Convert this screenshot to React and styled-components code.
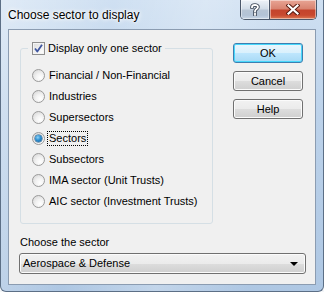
import React from 'react';
import styled, { createGlobalStyle } from 'styled-components';

const GlobalStyle = createGlobalStyle`
  html, body {
    margin: 0;
    padding: 0;
    background: #f4f6f8;
  }
  body {
    font-family: "Liberation Sans", Arial, sans-serif;
    font-size: 11px;
    color: #000;
  }
`;

const Window = styled.div`
  width: 324px;
  height: 292px;
  box-sizing: border-box;
  display: flex;
  flex-direction: column;
  padding: 0 7px 6px 7px;
  border: 1px solid #5c6f86;
  border-top: none;
  border-radius: 0 0 6px 6px;
  background:
    linear-gradient(100deg, rgba(255,255,255,0.35) 0%, rgba(255,255,255,0) 30%, rgba(255,255,255,0.25) 55%, rgba(255,255,255,0) 80%),
    linear-gradient(180deg, #cfe0f2 0%, #bcd2ea 40%, #aec7e3 100%);
`;

const TitleBar = styled.div`
  height: 29px;
  display: flex;
  align-items: flex-start;
  margin-right: -1px;
`;

const Title = styled.div`
  font-size: 12px;
  line-height: 14px;
  padding-top: 8px;
  color: #000;
  text-shadow: 0 0 6px #fff, 0 0 4px #fff, 0 0 2px #fff;
`;

const CaptionGroup = styled.div`
  margin-left: auto;
  display: flex;
  height: 20px;
  border: 1px solid #4b586a;
  border-top: none;
  border-radius: 0 0 5px 5px;
  overflow: hidden;
  box-sizing: border-box;
`;

const CaptionButton = styled.div`
  width: ${({ $w }) => $w}px;
  height: 100%;
  display: flex;
  align-items: center;
  justify-content: center;
  box-sizing: border-box;
  box-shadow: inset 0 0 0 1px rgba(255,255,255,0.45);
  background: ${({ $close }) =>
    $close
      ? 'linear-gradient(180deg, #e8a595 0%, #d98471 45%, #c4442c 55%, #c8492f 80%, #dc7b55 100%)'
      : 'linear-gradient(180deg, #eef3f8 0%, #d3dde8 45%, #b7c5d5 55%, #b3c3d6 80%, #c9d7e6 100%)'};
  & + & {
    border-left: 1px solid #4b586a;
  }
`;

const Client = styled.div`
  flex: 1;
  display: flex;
  flex-direction: column;
  border: 1px solid #8b9cb1;
  background: #f0f0f0;
  padding: 12px 12px 9px 11px;
`;

const TopRow = styled.div`
  display: flex;
  gap: 20px;
  align-items: flex-start;
`;

const Group = styled.fieldset`
  margin: 0;
  width: 193px;
  box-sizing: border-box;
  border: 1px solid #d5dfe5;
  border-radius: 3px;
  padding: 0 0 11px 11px;
  min-width: 0;
`;

const Legend = styled.legend`
  padding: 0 3px 0 4px;
  margin-left: -4px;
  height: 13px;
`;

const Option = styled.label`
  display: flex;
  align-items: center;
  gap: ${({ $gap }) => $gap || 4}px;
  height: ${({ $h }) => $h || 21}px;
  line-height: 13px;
  white-space: nowrap;
`;

const Box = styled.span`
  width: 13px;
  height: 13px;
  box-sizing: border-box;
  border: 1px solid #8f8f8f;
  background: linear-gradient(135deg, #dcdcdc 0%, #f6f6f6 70%, #fff 100%);
  box-shadow: inset 0 0 0 1px #f4f4f4;
  display: flex;
  align-items: center;
  justify-content: center;
  flex-shrink: 0;
`;

const Radio = styled.span`
  width: 13px;
  height: 13px;
  box-sizing: border-box;
  border-radius: 50%;
  border: 1px solid #9a9a9a;
  background: radial-gradient(circle at 65% 70%, #ffffff 0%, #f2f2f2 40%, #d2d2d2 100%);
  display: flex;
  align-items: center;
  justify-content: center;
  flex-shrink: 0;
  &::after {
    content: '';
    display: ${({ $on }) => ($on ? 'block' : 'none')};
    width: 7px;
    height: 7px;
    border-radius: 50%;
    background: radial-gradient(circle at 40% 35%, #8fd3f7 0%, #2c8ed0 45%, #16598f 100%);
    box-shadow: 0 0 0 0.5px #1d4f78;
  }
`;

const Radios = styled.div`
  display: flex;
  flex-direction: column;
  margin-top: 10px;
`;

const OptionText = styled.span`
  padding: 0 1px;
  margin-left: -1px;
  outline: ${({ $focus }) => ($focus ? '1px dotted #000' : 'none')};
  outline-offset: 0;
`;

const ButtonColumn = styled.div`
  display: flex;
  flex-direction: column;
  gap: 8px;
  margin-top: 1px;
`;

const Button = styled.div`
  width: 70px;
  height: 20px;
  box-sizing: border-box;
  border-radius: 3px;
  display: flex;
  align-items: center;
  justify-content: center;
  line-height: 13px;
  border: 1px solid ${({ $default }) => ($default ? '#3c7fb1' : '#707070')};
  box-shadow: inset 0 0 0 1px ${({ $default }) => ($default ? '#48d8fb' : '#fbfbfb')};
  background: ${({ $default }) =>
    $default
      ? 'linear-gradient(180deg, #eaf6fd 0%, #d9f0fc 50%, #bee6fd 51%, #a7d9f5 100%)'
      : 'linear-gradient(180deg, #f2f2f2 0%, #ebebeb 50%, #dddddd 51%, #cfcfcf 100%)'};
`;

const FieldLabel = styled.div`
  margin-top: 11px;
  line-height: 14px;
`;

const Combo = styled.div`
  margin-top: 4px;
  margin-left: -1px;
  width: 287px;
  height: 21px;
  box-sizing: border-box;
  border: 1px solid #707070;
  border-radius: 3px;
  box-shadow: inset 0 0 0 1px #fbfbfb;
  background: linear-gradient(180deg, #f2f2f2 0%, #ebebeb 50%, #dddddd 51%, #cfcfcf 100%);
  display: flex;
  align-items: center;
  padding: 0 7px 0 3px;
  line-height: 13px;
`;

const ComboArrow = styled.span`
  margin-left: auto;
  width: 0;
  height: 0;
  border-left: 4px solid transparent;
  border-right: 4px solid transparent;
  border-top: 4px solid #000;
  margin-top: 1px;
`;

const options = [
  'Financial / Non-Financial',
  'Industries',
  'Supersectors',
  'Sectors',
  'Subsectors',
  'IMA sector (Unit Trusts)',
  'AIC sector (Investment Trusts)',
];

const selected = 3;

const CheckMark = () => (
  <svg width="9" height="9" viewBox="0 0 9 9">
    <path d="M1 4.5 L3.3 7.5 L8 0.8" fill="none" stroke="#3f56a0" strokeWidth="1.8" strokeLinejoin="round" />
  </svg>
);

const HelpGlyph = () => (
  <svg width="10" height="13" viewBox="0 0 10 13">
    <path
      d="M2 4 C2 1.5 8 1.2 8 4 C8 6 5 6 5 8.2 M5 10.5 L5 11.8"
      fill="none"
      stroke="#3d4756"
      strokeWidth="3.6"
      strokeLinecap="square"
    />
    <path
      d="M2 4 C2 1.5 8 1.2 8 4 C8 6 5 6 5 8.2 M5 10.5 L5 11.8"
      fill="none"
      stroke="#fff"
      strokeWidth="1.8"
      strokeLinecap="square"
    />
  </svg>
);

const CloseGlyph = () => (
  <svg width="14" height="11" viewBox="0 0 14 11">
    <path d="M2.5 1.5 L11.5 9.5 M11.5 1.5 L2.5 9.5" stroke="#5a1d12" strokeWidth="4.2" strokeLinecap="square" />
    <path d="M2.5 1.5 L11.5 9.5 M11.5 1.5 L2.5 9.5" stroke="#fff" strokeWidth="2.2" strokeLinecap="square" />
  </svg>
);

const App = () => (
  <>
    <GlobalStyle />
    <Window>
      <TitleBar>
        <Title>Choose sector to display</Title>
        <CaptionGroup>
          <CaptionButton $w={28}>
            <HelpGlyph />
          </CaptionButton>
          <CaptionButton $w={47} $close>
            <CloseGlyph />
          </CaptionButton>
        </CaptionGroup>
      </TitleBar>
      <Client>
        <TopRow>
          <Group>
            <Legend>
              <Option $h={13} $gap={3}>
                <Box>
                  <CheckMark />
                </Box>
                <span>Display only one sector</span>
              </Option>
            </Legend>
            <Radios>
              {options.map((label, idx) => (
                <Option key={label}>
                  <Radio $on={idx === selected} />
                  <OptionText $focus={idx === selected}>{label}</OptionText>
                </Option>
              ))}
            </Radios>
          </Group>
          <ButtonColumn>
            <Button $default>OK</Button>
            <Button>Cancel</Button>
            <Button>Help</Button>
          </ButtonColumn>
        </TopRow>
        <FieldLabel>Choose the sector</FieldLabel>
        <Combo>
          <span>Aerospace &amp; Defense</span>
          <ComboArrow />
        </Combo>
      </Client>
    </Window>
  </>
);

export default App;
